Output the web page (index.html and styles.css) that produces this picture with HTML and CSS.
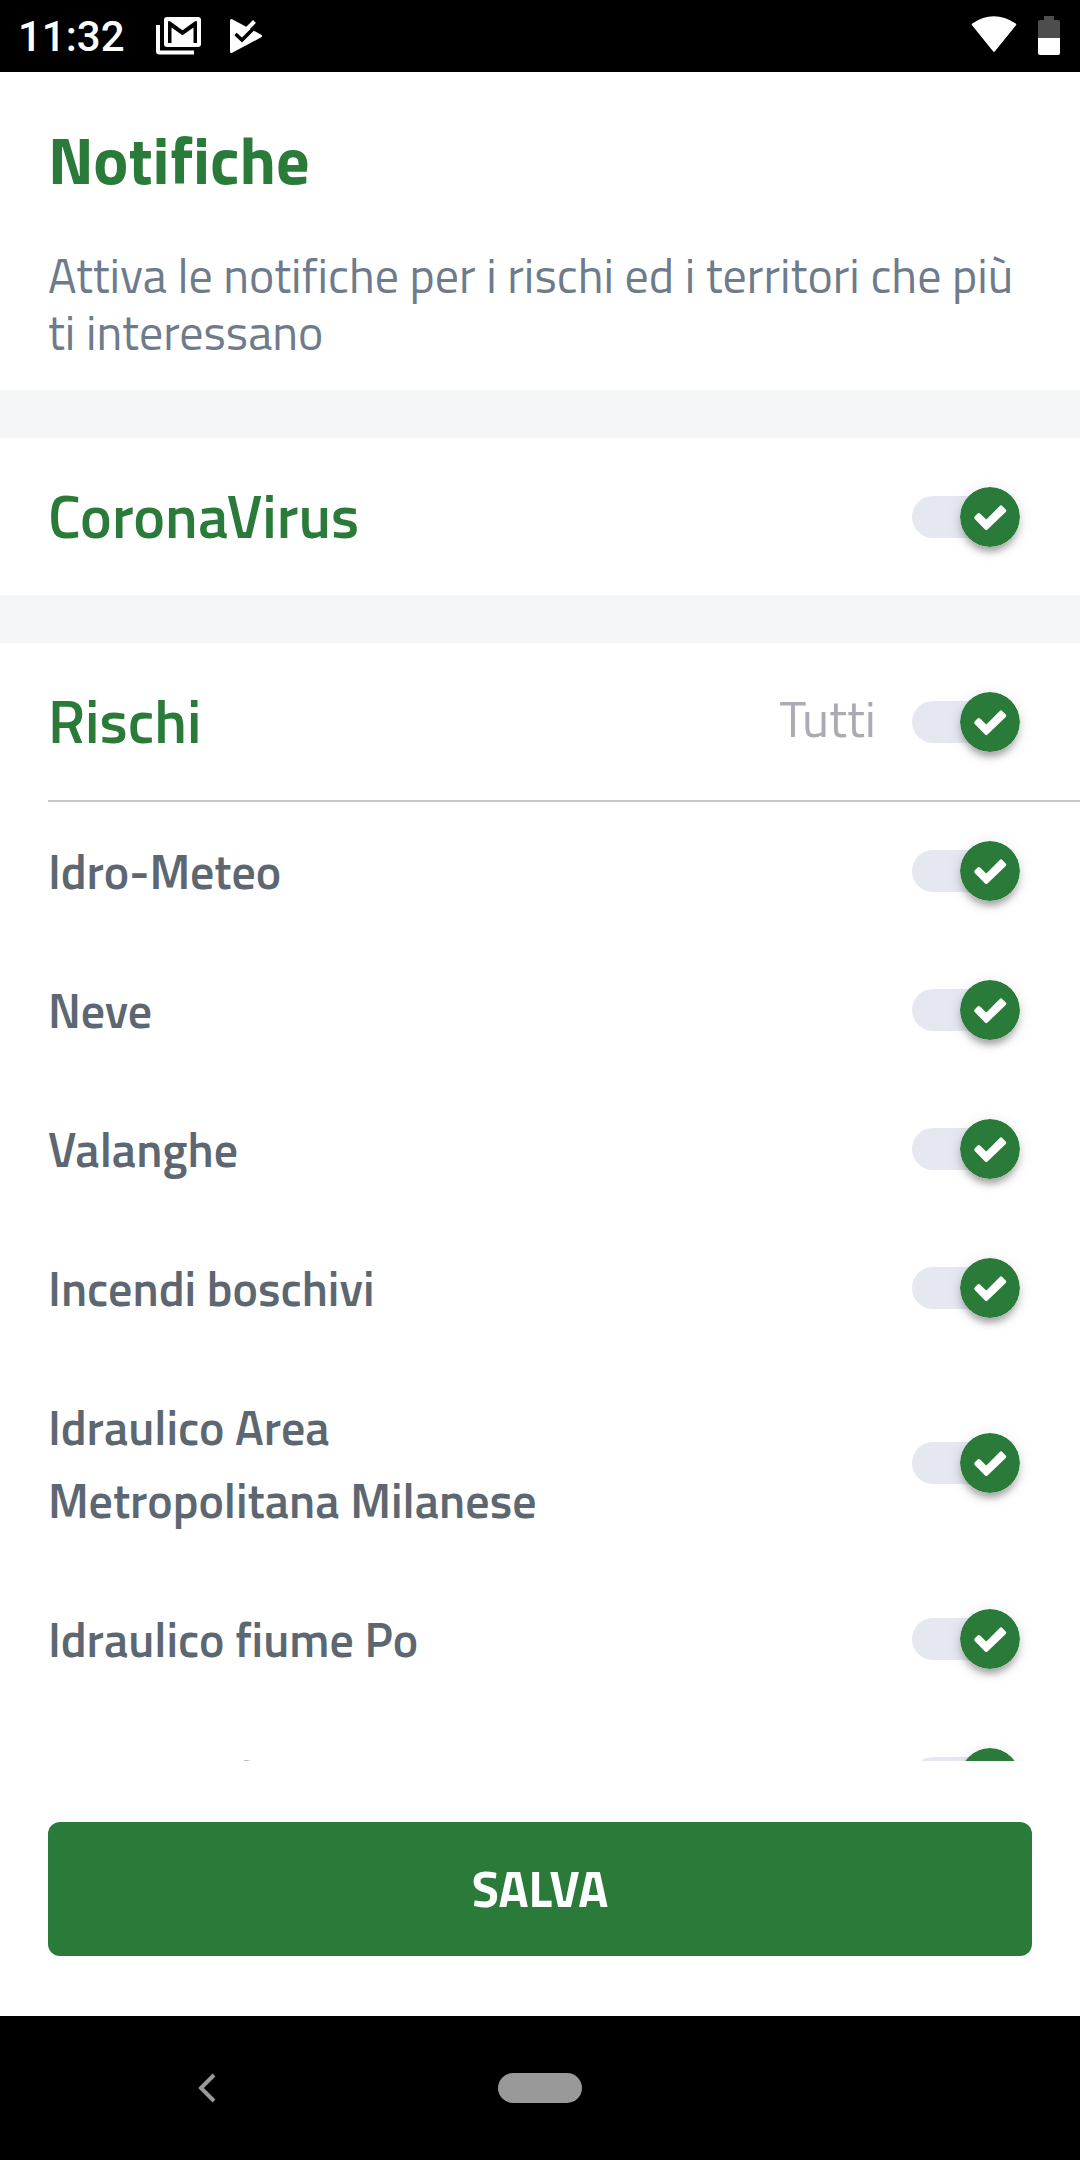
FILE: index.html
```html
<!DOCTYPE html>
<html lang="it">
<head>
  <meta charset="utf-8">
  <meta name="viewport" content="width=device-width, initial-scale=1">
  <title>Notifiche</title>
  <link rel="stylesheet" href="styles.css">
</head>
<body>
  <svg class="sprite" aria-hidden="true">
    <symbol id="knob" viewBox="0 0 60 60">
      <circle cx="30" cy="30" r="30" fill="#2a7b39"/>
      <path d="M16 30.800 18.800 27.800 26.300 35 41 20.200 44.500 23.700 26.300 41.300Z" fill="#fff" stroke="#fff" stroke-width="3.500" stroke-linejoin="round"/>
    </symbol>
  </svg>

  <div class="status">
    <time class="clock">11:32</time>
    <svg class="mail" viewBox="0 0 46 40" aria-hidden="true">
      <path d="M0 9h4v25.500h34v4H3.500Q0 38.500 0 35Z" fill="#fff"/>
      <rect x="8" y="1" width="37" height="30" rx="3" fill="#fff"/>
      <path d="M12 27V5.300h2l12.500 9 12.500-9h2V27h-3.500V11.500L26.500 19.300 15.500 11.500V27Z" fill="#000"/>
    </svg>
    <svg class="play" viewBox="0 0 36 40" aria-hidden="true">
      <path d="M3.500 4.500 32.500 20 3.500 35.500Z" fill="#fff" stroke="#fff" stroke-width="3" stroke-linejoin="round"/>
      <path d="M14 18 26.500 5.500" stroke="#fff" stroke-width="4"/>
      <path d="M7.500 18 14 24 32 6" fill="none" stroke="#000" stroke-width="3.500"/>
    </svg>
    <svg class="wifi" viewBox="0 0 46 37" aria-hidden="true">
      <path d="M2 8.500Q22.700-5.500 44 8.500L23 34.500Z" fill="#fff" stroke="#fff" stroke-width="2.500" stroke-linejoin="round"/>
    </svg>
    <svg class="battery" viewBox="0 0 22 39" aria-hidden="true">
      <path d="M6 0h10v4h4q2 0 2 2v16H0V6q0-2 2-2h4Z" fill="#4d4d4d"/>
      <path d="M0 22h22v15q0 2-2 2H2q-2 0-2-2Z" fill="#fff"/>
    </svg>
  </div>

  <main class="screen">
    <header class="intro">
      <h1 class="title">Notifiche</h1>
      <p class="lead">Attiva le notifiche per i rischi ed i territori che più ti interessano</p>
    </header>

    <section class="group">
      <div class="group-head">
        <h2 class="heading"><label for="corona">CoronaVirus</label></h2>
        <span class="toggle"><input id="corona" type="checkbox" role="switch" checked><svg class="knob"><use href="#knob"/></svg></span>
      </div>
    </section>

    <section class="group">
      <div class="group-head">
        <h2 class="heading">Rischi</h2>
        <label class="all" for="tutti">Tutti</label>
        <span class="toggle"><input id="tutti" type="checkbox" role="switch" checked><svg class="knob"><use href="#knob"/></svg></span>
      </div>
      <ul class="rows">
        <li class="row">
          <label class="name" for="idro">Idro-Meteo</label>
          <span class="toggle"><input id="idro" type="checkbox" role="switch" checked><svg class="knob"><use href="#knob"/></svg></span>
        </li>
        <li class="row">
          <label class="name" for="neve">Neve</label>
          <span class="toggle"><input id="neve" type="checkbox" role="switch" checked><svg class="knob"><use href="#knob"/></svg></span>
        </li>
        <li class="row">
          <label class="name" for="valanghe">Valanghe</label>
          <span class="toggle"><input id="valanghe" type="checkbox" role="switch" checked><svg class="knob"><use href="#knob"/></svg></span>
        </li>
        <li class="row">
          <label class="name" for="incendi">Incendi boschivi</label>
          <span class="toggle"><input id="incendi" type="checkbox" role="switch" checked><svg class="knob"><use href="#knob"/></svg></span>
        </li>
        <li class="row">
          <label class="name" for="milano">Idraulico Area Metropolitana Milanese</label>
          <span class="toggle"><input id="milano" type="checkbox" role="switch" checked><svg class="knob"><use href="#knob"/></svg></span>
        </li>
        <li class="row">
          <label class="name" for="po">Idraulico fiume Po</label>
          <span class="toggle"><input id="po" type="checkbox" role="switch" checked><svg class="knob"><use href="#knob"/></svg></span>
        </li>
        <li class="row">
          <label class="name" for="secchia">Idraulico fiume Secchia</label>
          <span class="toggle"><input id="secchia" type="checkbox" role="switch" checked><svg class="knob"><use href="#knob"/></svg></span>
        </li>
      </ul>
    </section>
  </main>

  <footer class="actions">
    <button class="save" type="button">SALVA</button>
  </footer>

  <nav class="navbar" aria-label="Sistema">
    <button class="back" type="button" aria-label="Indietro">
      <svg viewBox="0 0 18 30" aria-hidden="true"><path d="M16 2 3 15 16 28" fill="none" stroke="#999" stroke-width="4"/></svg>
    </button>
    <button class="home" type="button" aria-label="Home"></button>
  </nav>
</body>
</html>
```
FILE: styles.css
```css
* {
  box-sizing: border-box;
}

body {
  margin: 0;
  height: 100vh;
  display: flex;
  flex-direction: column;
  background: #fff;
  font-family: "Titillium Web", Roboto, sans-serif;
}

button {
  border: 0;
  padding: 0;
  font-family: inherit;
}

.sprite {
  display: none;
}

/* Status bar */
.status {
  flex: none;
  display: flex;
  align-items: flex-start;
  height: 72px;
  padding: 16px 20px 0 18px;
  background: #000;
}

.clock {
  width: 138px;
  color: #fff;
  font: 500 42px/42px Roboto, sans-serif;
}

.mail {
  width: 46px;
  height: 40px;
}

.play {
  width: 36px;
  height: 40px;
  margin-left: 26px;
}

.wifi {
  width: 46px;
  height: 37px;
  margin-left: auto;
}

.battery {
  width: 22px;
  height: 39px;
  margin-left: 21px;
}

/* Scrolling content */
.screen {
  flex: 1;
  min-height: 0;
  overflow-y: auto;
  scrollbar-width: none;
}

.intro {
  padding: 52px 48px 29px;
}

.title {
  margin: 0 0 51px;
  color: #2a7b39;
  font-size: 66px;
  font-weight: 700;
  line-height: 72px;
}

.lead {
  margin: 0;
  color: #6d7b8b;
  font-size: 48px;
  font-weight: 400;
  line-height: 57px;
}

.group {
  border-top: 48px solid #f4f6f8;
}

.group-head {
  display: flex;
  align-items: center;
  height: 157px;
  padding: 0 60px 0 48px;
}

.heading {
  flex: 1;
  margin: 0;
  padding-bottom: 2px;
  color: #2a7b39;
  font-size: 60px;
  font-weight: 600;
  line-height: 74px;
}

.all {
  margin-right: 36px;
  padding-bottom: 8px;
  color: #acabb5;
  font-size: 51px;
  font-weight: 400;
}

.rows {
  margin: 0 0 0 48px;
  padding: 0;
  border-top: 2px solid #c8c7cc;
  list-style: none;
}

.row {
  display: flex;
  align-items: center;
  justify-content: space-between;
  padding-right: 60px;
}

.name {
  max-width: 540px;
  padding: 33px 0;
  color: #5d6771;
  font-size: 48px;
  font-weight: 600;
  line-height: 73px;
}

/* Switch */
.toggle {
  position: relative;
  flex: none;
  display: flex;
  align-items: center;
  width: 108px;
  height: 60px;
}

.row .toggle {
  margin-bottom: 2px;
}

.toggle input {
  appearance: none;
  width: 96px;
  height: 42px;
  margin: 0;
  border-radius: 21px;
  background: #e5e8f1;
}

.knob {
  position: absolute;
  left: 0;
  width: 60px;
  height: 60px;
  border-radius: 50%;
  box-shadow: 0 9px 6px -6px rgba(0, 0, 0, 0.2), 0 6px 6px rgba(0, 0, 0, 0.14), 0 3px 15px rgba(0, 0, 0, 0.12);
  pointer-events: none;
}

.toggle input:checked + .knob {
  left: auto;
  right: 0;
}

/* Footer */
.actions {
  flex: none;
  padding: 61px 48px 60px;
}

.save {
  display: block;
  width: 100%;
  height: 134px;
  padding-bottom: 2px;
  border-radius: 12px;
  background: #2a7b39;
  color: #fff;
  font-size: 50px;
  font-weight: 700;
}

.navbar {
  flex: none;
  display: grid;
  grid-template-columns: 1fr auto 1fr;
  align-items: center;
  height: 144px;
  background: #000;
}

.back {
  justify-self: center;
  display: flex;
  margin-right: 84px;
  background: none;
}

.back svg {
  width: 18px;
  height: 30px;
}

.home {
  width: 84px;
  height: 30px;
  border-radius: 15px;
  background: #999;
}
```
